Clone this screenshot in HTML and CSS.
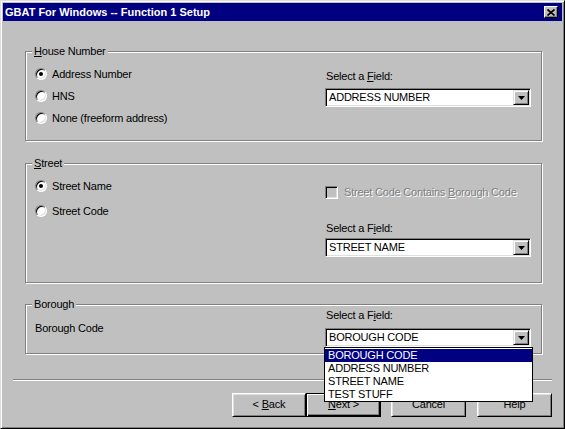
FILE: index.html
```html
<!DOCTYPE html>
<html>
<head>
<meta charset="utf-8">
<title>GBAT For Windows -- Function 1 Setup</title>
<link rel="stylesheet" href="styles.css">
</head>
<body>
<div class="window">
  <div class="titlebar">
    <span class="title">GBAT For Windows -- Function 1 Setup</span>
    <span class="close"><svg width="8" height="7" viewBox="0 0 8 7"><path d="M0.5 0.5L7.5 6.5M7.5 0.5L0.5 6.5" stroke="#000" stroke-width="1.7" fill="none"/></svg></span>
  </div>
  <div class="main">
    <section class="group g1">
      <div class="legend"><u>H</u>ouse Number</div>
      <div class="group-body">
        <div class="left">
          <div class="radio-row"><span class="radio on"></span><span>Address Number</span></div>
          <div class="radio-row"><span class="radio"></span><span>HNS</span></div>
          <div class="radio-row"><span class="radio"></span><span>None (freeform address)</span></div>
        </div>
        <div class="right">
          <div class="field-label">Select a <u>F</u>ield:</div>
          <div class="combo"><span class="combo-text">ADDRESS NUMBER</span><span class="combo-btn"><svg width="7" height="4" viewBox="0 0 7 4"><path d="M0 0H7L3.5 4Z" fill="#000"/></svg></span></div>
        </div>
      </div>
    </section>
    <section class="group g2">
      <div class="legend"><u>S</u>treet</div>
      <div class="group-body">
        <div class="left">
          <div class="radio-row"><span class="radio on"></span><span>Street Name</span></div>
          <div class="radio-row"><span class="radio"></span><span>Street Code</span></div>
        </div>
        <div class="right">
          <div class="check-row"><span class="checkbox"></span><span>Street Code Contains <u>B</u>orough Code</span></div>
          <div class="field-label">Select a F<u>i</u>eld:</div>
          <div class="combo"><span class="combo-text">STREET NAME</span><span class="combo-btn"><svg width="7" height="4" viewBox="0 0 7 4"><path d="M0 0H7L3.5 4Z" fill="#000"/></svg></span></div>
        </div>
      </div>
    </section>
    <section class="group g3">
      <div class="legend">Borough</div>
      <div class="group-body">
        <div class="left">
          <div class="plain-label">Borough Code</div>
        </div>
        <div class="right">
          <div class="field-label">Select a F<u>i</u>eld:</div>
          <div class="combo"><span class="combo-text">BOROUGH CODE</span><span class="combo-btn"><svg width="7" height="4" viewBox="0 0 7 4"><path d="M0 0H7L3.5 4Z" fill="#000"/></svg></span>
            <div class="dropdown">
              <div class="dd-item selected">BOROUGH CODE</div>
              <div class="dd-item">ADDRESS NUMBER</div>
              <div class="dd-item">STREET NAME</div>
              <div class="dd-item">TEST STUFF</div>
            </div>
          </div>
        </div>
      </div>
    </section>
  </div>
  <div class="footer">
    <div class="sep"></div>
    <div class="buttons">
      <div class="btn back"><span>&lt; <u>B</u>ack</span></div>
      <div class="btn next default"><span><u>N</u>ext &gt;</span></div>
      <div class="btn cancel"><span>Cancel</span></div>
      <div class="btn help"><span>Help</span></div>
    </div>
  </div>
</div>
</body>
</html>
```

FILE: styles.css
```css
* { box-sizing: border-box; }

body {
  margin: 0;
  font-family: "Liberation Sans", Arial, sans-serif;
  font-size: 11px;
  letter-spacing: -0.2px;
  color: #000;
  background: #c0c0c0;
}

u { text-decoration: underline; text-underline-offset: 1px; }

.window {
  width: 565px;
  height: 429px;
  background: #c0c0c0;
  border: 1px solid;
  border-color: #dfdfdf #000 #000 #dfdfdf;
  box-shadow: inset 1px 1px 0 #fff, inset -1px -1px 0 #808080;
  padding: 2px;
  display: flex;
  flex-direction: column;
}

.titlebar {
  height: 18px;
  flex: none;
  background: #000080;
  color: #fff;
  display: flex;
  align-items: center;
  justify-content: space-between;
  padding: 0 4px 0 2px;
}

.title {
  font-weight: bold;
  font-size: 11px;
  line-height: 18px;
  letter-spacing: 0;
}

.close {
  width: 14px;
  height: 12px;
  background: #c0c0c0;
  border: 1px solid;
  border-color: #fff #000 #000 #fff;
  box-shadow: inset -1px -1px 0 #808080;
  display: flex;
  align-items: center;
  justify-content: center;
}

.main {
  padding: 30px 20px 0 22px;
}

.group {
  border: 1px solid #808080;
  box-shadow: inset 1px 1px 0 #fff, 1px 1px 0 #fff;
}

.g1 { height: 90px; margin-bottom: 22px; }
.g2 { height: 120px; margin-bottom: 21px; }
.g3 { height: 50px; }

.legend {
  width: max-content;
  margin: -7px 0 -6px 6px;
  padding: 0 2px;
  line-height: 13px;
  height: 13px;
  background: #c0c0c0;
}

.group-body {
  display: flex;
  align-items: flex-start;
  padding: 0 10px 0 7px;
}

.left {
  flex: 1;
  display: flex;
  flex-direction: column;
}

.right {
  width: 206px;
  flex: none;
  display: flex;
  flex-direction: column;
}

.g1 .left { padding-top: 11px; }
.g1 .right { padding-top: 18px; }
.g1 .field-label { margin-bottom: 5px; }

.g2 .left { padding-top: 11px; gap: 3px; }
.g2 .right { padding-top: 22px; }
.g2 .field-label { margin-top: 23px; margin-bottom: 3px; }

.g3 .left { padding-top: 17px; }
.g3 .right { padding-top: 4px; }
.g3 .field-label { margin-bottom: 6px; }

.radio-row {
  height: 22px;
  display: flex;
  align-items: center;
  line-height: 13px;
}

.radio {
  width: 12px;
  height: 12px;
  flex: none;
  margin: 0 5px 0 2px;
  border-radius: 50%;
  background: #fff;
  border: 1px solid;
  border-color: #808080 #fff #fff #808080;
  box-shadow: inset 1px 1px 0 #000, inset -1px -1px 0 #dfdfdf;
  display: flex;
  align-items: center;
  justify-content: center;
}

.radio.on::after {
  content: "";
  width: 4px;
  height: 4px;
  border-radius: 50%;
  background: #000;
}

.plain-label {
  line-height: 13px;
  padding-left: 2px;
}

.field-label {
  line-height: 13px;
  height: 13px;
  padding-left: 1px;
}

.check-row {
  display: flex;
  align-items: center;
  height: 13px;
  line-height: 13px;
  color: #808080;
  text-shadow: 1px 1px 0 #fff;
  white-space: nowrap;
}

.checkbox {
  width: 13px;
  height: 13px;
  flex: none;
  margin-right: 6px;
  background: #c0c0c0;
  border: 1px solid;
  border-color: #808080 #fff #fff #808080;
  box-shadow: inset 1px 1px 0 #000, inset -1px -1px 0 #dfdfdf;
}

.combo {
  position: relative;
  height: 19px;
  background: #fff;
  border: 1px solid;
  border-color: #808080 #fff #fff #808080;
  box-shadow: inset 1px 1px 0 #000, inset -1px -1px 0 #dfdfdf;
  padding: 1px;
  display: flex;
  align-items: center;
}

.combo-text {
  flex: 1;
  padding-left: 2px;
  line-height: 15px;
}

.combo-btn {
  width: 16px;
  height: 15px;
  flex: none;
  background: #c0c0c0;
  border: 1px solid;
  border-color: #dfdfdf #000 #000 #dfdfdf;
  box-shadow: inset 1px 1px 0 #fff, inset -1px -1px 0 #808080;
  display: flex;
  align-items: center;
  justify-content: center;
}

.dropdown {
  position: absolute;
  top: calc(100% + 1px);
  left: -2px;
  right: -3px;
  z-index: 10;
  background: #fff;
  border: 1px solid #000;
  padding-top: 1px;
}

.dd-item {
  height: 13px;
  line-height: 13px;
  padding-left: 3px;
  white-space: nowrap;
}

.dd-item.selected {
  background: #000080;
  color: #fff;
}

.footer {
  display: flex;
  flex-direction: column;
}

.sep {
  height: 2px;
  margin: 25px 10px 0;
  border-top: 1px solid #808080;
  border-bottom: 1px solid #fff;
}

.buttons {
  display: flex;
  justify-content: flex-end;
  margin: 12px 10px 0 0;
}

.btn {
  width: 75px;
  height: 24px;
  background: #c0c0c0;
  border: 1px solid;
  border-color: #fff #000 #000 #fff;
  box-shadow: inset 1px 1px 0 #dfdfdf, inset -1px -1px 0 #808080;
  display: flex;
  align-items: center;
  justify-content: center;
  line-height: 13px;
  padding-bottom: 1px;
  white-space: nowrap;
}

.btn.back { width: 74px; }

.btn.default {
  border-color: #000;
  box-shadow: inset 1px 1px 0 #fff, inset -1px -1px 0 #000, inset -2px -2px 0 #808080;
}

.btn.cancel { margin-left: 10px; }
.btn.help { margin-left: 11px; }
```
